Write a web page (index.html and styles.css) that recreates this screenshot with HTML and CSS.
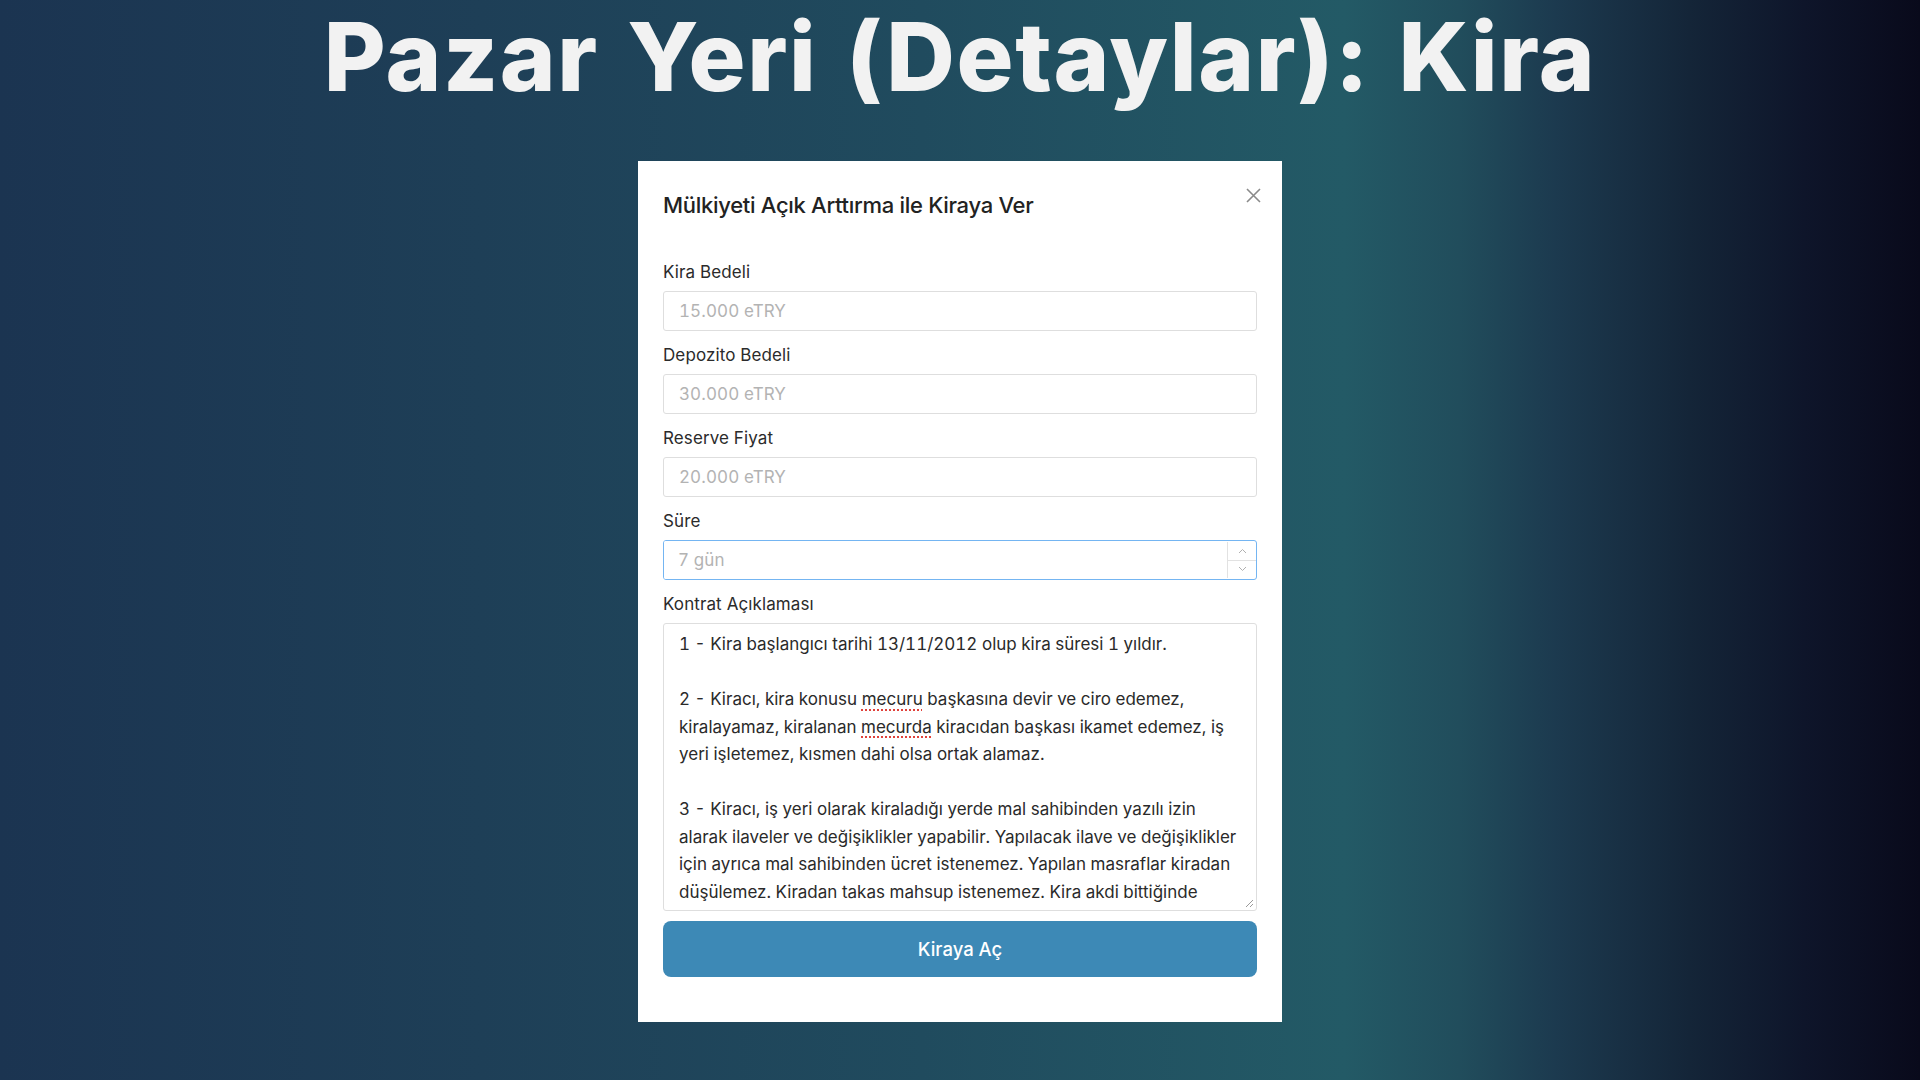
FILE: index.html
```html
<!DOCTYPE html>
<html lang="tr">
<head>
<meta charset="utf-8">
<title>Pazar Yeri (Detaylar): Kira</title>
<link rel="stylesheet" href="styles.css">
</head>
<body>
<h1 class="page-title">Pazar Yeri (Detaylar): Kira</h1>
<div class="modal">
  <button class="close" aria-label="Kapat">
    <svg width="15" height="15" viewBox="0 0 15 15"><path d="M1 1 L14 14 M14 1 L1 14" stroke="#8a8a8a" stroke-width="1.6" fill="none"/></svg>
  </button>
  <h2 class="modal-title">Mülkiyeti Açık Arttırma ile Kiraya Ver</h2>
  <div class="field">
    <label class="label">Kira Bedeli</label>
    <input class="input" type="text" placeholder="15.000 eTRY">
  </div>
  <div class="field">
    <label class="label">Depozito Bedeli</label>
    <input class="input" type="text" placeholder="30.000 eTRY">
  </div>
  <div class="field">
    <label class="label">Reserve Fiyat</label>
    <input class="input" type="text" placeholder="20.000 eTRY">
  </div>
  <div class="field">
    <label class="label">Süre</label>
    <div class="number focus">
      <input class="number-input" type="text" placeholder="7 gün">
      <div class="spinner">
        <span class="spin"><svg width="9" height="6" viewBox="0 0 9 6"><path d="M1 5 L4.5 1.5 L8 5" stroke="#b0b0b0" stroke-width="1" fill="none"/></svg></span>
        <span class="spin spin-down"><svg width="9" height="6" viewBox="0 0 9 6"><path d="M1 1 L4.5 4.5 L8 1" stroke="#b0b0b0" stroke-width="1" fill="none"/></svg></span>
      </div>
    </div>
  </div>
  <div class="field field-last">
    <label class="label">Kontrat Açıklaması</label>
    <div class="textarea">
      <div class="ta-body">
        <p>1 - Kira başlangıcı tarihi 13/11/2012 olup kira süresi 1 yıldır.</p>
        <p>2 - Kiracı, kira konusu <span class="spell">mecuru</span> başkasına devir ve ciro edemez,<br>kiralayamaz, kiralanan <span class="spell">mecurda</span> kiracıdan başkası ikamet edemez, iş<br>yeri işletemez, kısmen dahi olsa ortak alamaz.</p>
        <p>3 - Kiracı, iş yeri olarak kiraladığı yerde mal sahibinden yazılı izin<br>alarak ilaveler ve değişiklikler yapabilir. Yapılacak ilave ve değişiklikler<br>için ayrıca mal sahibinden ücret istenemez. Yapılan masraflar kiradan<br>düşülemez. Kiradan takas mahsup istenemez. Kira akdi bittiğinde</p>
      </div>
      <svg class="grip" width="9" height="9" viewBox="0 0 9 9"><path d="M8 1 L1 8 M8 5 L5 8" stroke="#9a9a9a" stroke-width="1" fill="none"/></svg>
    </div>
  </div>
  <button class="btn">Kiraya Aç</button>
</div>
</body>
</html>
```
FILE: styles.css
```css
* { box-sizing: border-box; }
html, body { margin: 0; padding: 0; }
body {
  width: 1920px;
  height: 1080px;
  overflow: hidden;
  display: flex;
  flex-direction: column;
  align-items: center;
  font-family: "Inter", "Noto Sans", sans-serif;
  background: linear-gradient(90deg, #1b3451 0%, #1e3f57 25%, #204b5e 48%, #235a66 70%, #214d5c 76%, #1c3a4f 81%, #142538 88%, #0e152a 94%, #090a1b 100%);
}
.page-title {
  margin: 9px 0 0;
  font-family: "Inter", sans-serif;
  font-weight: 800;
  font-size: 95px;
  line-height: 95px;
  letter-spacing: 1.6px;
  word-spacing: 6px;
  color: #f2f2f2;
  white-space: nowrap;
}
.modal {
  position: relative;
  margin-top: 57px;
  width: 644px;
  background: #fff;
  padding: 29px 25px 45px;
  display: flex;
  flex-direction: column;
}
.close {
  position: absolute;
  top: 27px;
  right: 21px;
  width: 15px;
  height: 15px;
  padding: 0;
  border: 0;
  background: none;
  line-height: 0;
}
.modal-title {
  margin: 0 0 40px;
  font-size: 22px;
  line-height: 30px;
  font-weight: 500;
  color: #222;
  letter-spacing: -0.3px;
}
.field {
  display: flex;
  flex-direction: column;
  margin-bottom: 12px;
}
.field-last { margin-bottom: 10px; }
.label {
  font-size: 17px;
  line-height: 24px;
  color: #2b2b2b;
  margin-bottom: 7px;
  letter-spacing: 0.1px;
}
.input {
  height: 40px;
  border: 1px solid #dedede;
  border-radius: 3px;
  padding: 0 15px;
  font-family: inherit;
  font-size: 17px;
  color: #333;
  outline: none;
  letter-spacing: 0.1px;
  font-variant-numeric: tabular-nums;
}
.input::placeholder, .number-input::placeholder { color: #b3b3b3; }
.number {
  height: 40px;
  display: flex;
  border: 1px solid #dedede;
  border-radius: 3px;
  overflow: hidden;
}
.number.focus { border-color: #74b5f2; }
.number-input {
  flex: 1;
  border: 0;
  padding: 0 14px;
  font-family: inherit;
  font-size: 17px;
  outline: none;
  letter-spacing: 0.1px;
  font-variant-numeric: tabular-nums;
}
.spinner {
  width: 29px;
  display: flex;
  flex-direction: column;
  border-left: 1px solid #e2e2e2;
  margin: 1px 0;
}
.spin {
  flex: 1;
  display: flex;
  align-items: center;
  justify-content: center;
}
.spin-down { border-top: 1px solid #e2e2e2; }
.textarea {
  position: relative;
  height: 288px;
  border: 1px solid #dedede;
  border-radius: 3px;
  overflow: hidden;
}
.ta-body {
  padding: 7px 12px 0 15px;
  font-size: 17px;
  line-height: 27.5px;
  color: #2a2a2a;
  white-space: nowrap;
  font-variant-numeric: tabular-nums;
}
.ta-body p { margin: 0 0 27.5px; }
.spell {
  text-decoration: underline dotted #e0413a;
  text-decoration-thickness: 2px;
  text-underline-offset: 4px;
}
.grip {
  position: absolute;
  right: 2px;
  bottom: 2px;
}
.btn {
  height: 56px;
  border: 0;
  border-radius: 8px;
  background: #3d89b6;
  color: #fff;
  font-family: inherit;
  font-size: 18.5px;
  font-weight: 500;
}
```
